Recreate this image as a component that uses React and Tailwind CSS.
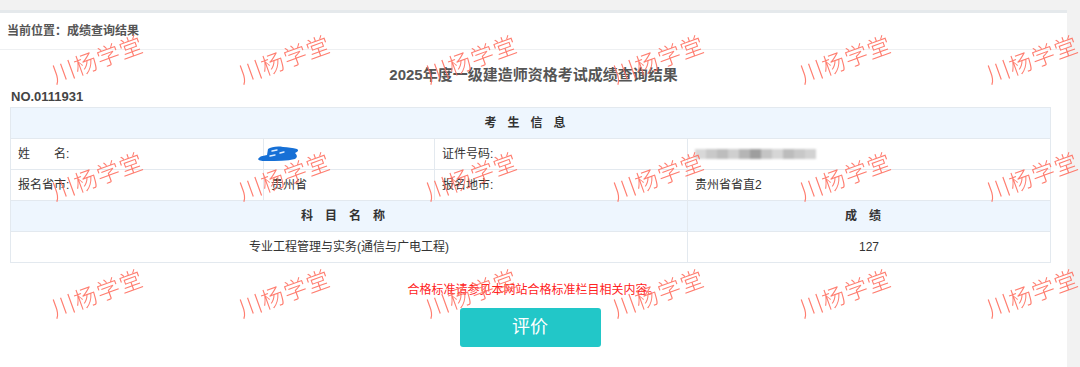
import React from 'react';

const marks = Array.from({ length: 18 });

const Watermarks = () => (
  <div className="pointer-events-none absolute left-[3px] top-0 grid grid-cols-[repeat(6,187px)] grid-rows-[repeat(3,117px)]">
    {marks.map((_, i) => (
      <div key={i} className="flex items-center justify-center">
        <span className="-rotate-20 text-[23px] font-light leading-none tracking-[1px] text-[#ff6f60] opacity-90 font-['Noto_Sans_CJK_SC',sans-serif]">
          川杨学堂
        </span>
      </div>
    ))}
  </div>
);

// 蓝色涂抹遮挡（姓名）
const NameScribble = () => (
  <svg className="absolute left-[-9px] top-[5px]" width="46" height="19" viewBox="0 0 46 19">
    <path
      d="M3 15 C6 11 9 12 12 11 L13 5 C16 3 22 2 28 3 C33 3 38 4 42 5 C44 6 43 8 40 9 C42 11 43 13 40 15 C32 17 22 17 12 17 C8 17 4 17 3 15 Z"
      fill="#1670d6"
    />
    <path d="M17 7 L22 6 M25 9 L29 8 M15 12 L20 11" stroke="#dfeefe" strokeWidth="1.4" strokeLinecap="round" />
  </svg>
);

// 模糊处理的证件号
const BlurredId = () => {
  const tones = ['#d8d8d8', '#c9c9c9', '#bdbdbd', '#cfcfcf', '#b5b5b5', '#9e9e9e', '#c4c4c4', '#d6d6d6', '#bcbcbc', '#c8c8c8', '#d2d2d2'];
  return (
    <div className="flex h-[10px] blur-[1.2px]">
      {tones.map((c, i) => (
        <span key={i} className="h-full w-[11px]" style={{ background: c }} />
      ))}
    </div>
  );
};

const cell = 'h-[31px] border border-[#e3e9ef] px-[7px] text-[12px] text-[#333]';
const head = 'h-[31px] border border-[#e3e9ef] bg-[#eef6fe] text-center text-[12px] font-bold text-[#333]';

export default function App() {
  return (
    <div className="relative flex h-[367px] w-[1080px] overflow-hidden bg-[#f2f2f2] font-['Liberation_Sans','Noto_Sans_CJK_SC',sans-serif]">
      <div className="mt-[10px] w-[1067px] border-t-[3px] border-[#e5e9ec] bg-white">
        {/* 面包屑 */}
        <div className="flex h-[37px] items-center border-b border-[#eef0f2] pl-[7px] text-[12px] font-bold text-[#555]">
          当前位置：成绩查询结果
        </div>

        <div className="mt-[13px] text-center text-[15px] font-bold leading-[24px] text-[#555]">
          2025年度一级建造师资格考试成绩查询结果
        </div>
        <div className="mt-[2px] pl-[11px] text-[13px] font-bold leading-[16px] text-[#444]">NO.0111931</div>

        <table className="ml-[10px] mt-[2px] w-[1040px] table-fixed border-collapse">
          <colgroup>
            <col className="w-[253px]" />
            <col className="w-[171px]" />
            <col className="w-[253px]" />
            <col className="w-[363px]" />
          </colgroup>
          <tbody>
            <tr>
              <td colSpan={4} className={`${head} tracking-[11px]`}>考生信息</td>
            </tr>
            <tr>
              <td className={cell}>姓　　名:</td>
              <td className={`${cell} relative`}>
                <NameScribble />
              </td>
              <td className={cell}>证件号码:</td>
              <td className={cell}>
                <BlurredId />
              </td>
            </tr>
            <tr>
              <td className={cell}>报名省市:</td>
              <td className={cell}>贵州省</td>
              <td className={cell}>报名地市:</td>
              <td className={cell}>贵州省省直2</td>
            </tr>
            <tr>
              <td colSpan={3} className={`${head} tracking-[12px]`}>科目名称</td>
              <td className={`${head} tracking-[12px]`}>成绩</td>
            </tr>
            <tr>
              <td colSpan={3} className={`${cell} text-center`}>专业工程管理与实务(通信与广电工程)</td>
              <td className={`${cell} text-center`}>127</td>
            </tr>
          </tbody>
        </table>

        <div className="mt-[20px] text-center text-[12px] leading-[14px] text-[#f22]">
          合格标准请参见本网站合格标准栏目相关内容。
        </div>
        <div className="mt-[11px] flex justify-center pr-[7px]">
          <button className="h-[39px] w-[141px] rounded-[3px] bg-[#22c7c8] text-[18px] text-white">评价</button>
        </div>
      </div>
      <Watermarks />
    </div>
  );
}
